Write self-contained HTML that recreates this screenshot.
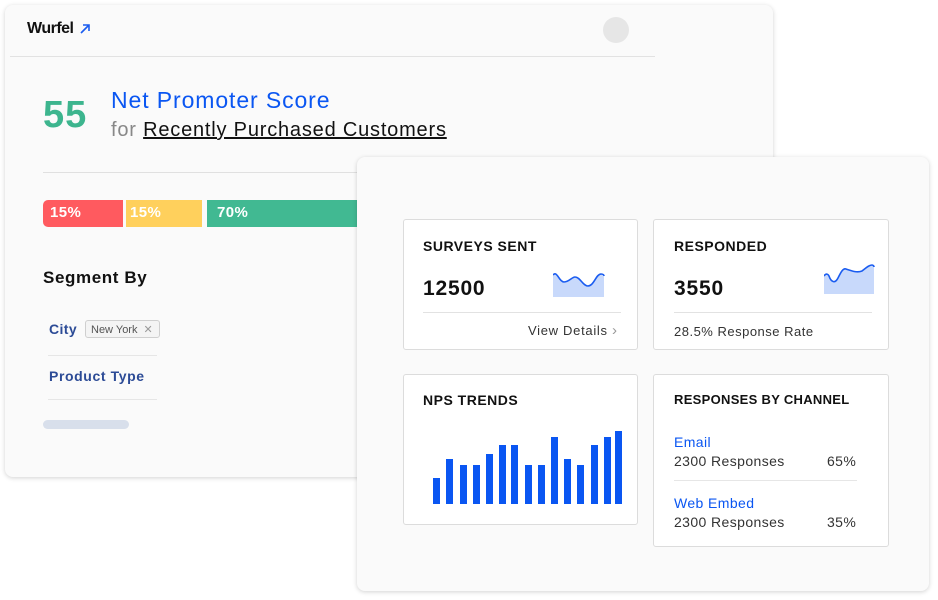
<!DOCTYPE html>
<html><head><style>
*{box-sizing:border-box;margin:0;padding:0}
body{width:938px;height:600px;background:#fff;font-family:"Liberation Sans",sans-serif;position:relative;overflow:hidden;color:#111;letter-spacing:.4px}
.abs{position:absolute}
.card{position:absolute;background:#fafafa;border-radius:8px;box-shadow:0 1px 5px rgba(0,0,0,.18)}
.box{position:absolute;background:#fff;border:1px solid #dcdcdc;border-radius:3px}
.h{position:absolute;font-weight:bold;font-size:14px;letter-spacing:.5px;color:#111}
.big{position:absolute;font-weight:bold;font-size:21px;color:#111;letter-spacing:.8px}
</style></head><body>
<div class="card" style="left:5px;top:5px;width:768px;height:472px"></div>
<div class="abs" style="left:27px;top:20px;font-weight:bold;font-size:16px;letter-spacing:-.5px">Wurfel</div>
<svg class="abs" style="left:79px;top:23px" width="12" height="12" viewBox="0 0 12 12"><path d="M2 10L10 2M4 2H10V8" stroke="#1a5cf0" stroke-width="1.6" fill="none"/></svg>
<div class="abs" style="left:603px;top:17px;width:26px;height:26px;border-radius:50%;background:#e6e6e6"></div>
<div class="abs" style="left:10px;top:56px;width:645px;height:1px;background:#e2e2e2"></div>
<div class="abs" style="left:43px;top:94px;font-size:38px;font-weight:bold;color:#3db58e;letter-spacing:1px">55</div>
<div class="abs" style="left:111px;top:87px;font-size:23px;color:#0a56f2;letter-spacing:.9px">Net Promoter Score</div>
<div class="abs" style="left:111px;top:119px;font-size:20px;color:#888;letter-spacing:.8px">for <span style="color:#111;text-decoration:underline">Recently Purchased Customers</span></div>
<div class="abs" style="left:43px;top:172px;width:320px;height:1px;background:#e0e0e0"></div>
<div class="abs" style="left:43px;top:200px;width:80px;height:27px;background:#ff5a5f;border-radius:5px 0 0 5px;color:#fff;font-weight:bold;font-size:15px;padding:4px 7px">15%</div>
<div class="abs" style="left:126px;top:200px;width:76px;height:27px;background:#ffd05c;color:#fff;font-weight:bold;font-size:15px;padding:4px 4px">15%</div>
<div class="abs" style="left:207px;top:200px;width:152px;height:27px;background:#41b992;color:#fff;font-weight:bold;font-size:15px;padding:4px 10px">70%</div>
<div class="abs" style="left:43px;top:268px;font-size:17px;font-weight:bold;letter-spacing:.6px">Segment By</div>
<div class="abs" style="left:49px;top:321px;font-size:14px;font-weight:bold;color:#2c4b96">City</div>
<div class="abs" style="left:85px;top:320px;width:75px;height:18px;border:1px solid #cfcfcf;border-radius:3px;background:#f4f4f4;font-size:11px;color:#555;padding:2px 5px;letter-spacing:0">New York <span style="color:#999;margin-left:3px">✕</span></div>
<div class="abs" style="left:48px;top:355px;width:109px;height:1px;background:#e6e6e6"></div>
<div class="abs" style="left:49px;top:368px;font-size:14px;font-weight:bold;color:#2c4b96;letter-spacing:.6px">Product Type</div>
<div class="abs" style="left:48px;top:399px;width:109px;height:1px;background:#e6e6e6"></div>
<div class="abs" style="left:43px;top:420px;width:86px;height:9px;border-radius:5px;background:#d8dfeb"></div>

<div class="card" style="left:357px;top:157px;width:572px;height:434px"></div>
<div class="box" style="left:403px;top:219px;width:235px;height:131px"></div>
<div class="h" style="left:423px;top:238px">SURVEYS SENT</div>
<div class="big" style="left:423px;top:277px">12500</div>
<svg class="abs" style="left:553px;top:271px" width="52" height="26" viewBox="0 0 52 26"><path d="M0 4C4 -1 6 11 11 11C16 11 19 6 22 6C27 6 30 15 35 15C41 15 43 3 48 3C50 3 51 4 51 5V26H0Z" fill="#c8d9fb"/><path d="M0 4C4 -1 6 11 11 11C16 11 19 6 22 6C27 6 30 15 35 15C41 15 43 3 48 3C50 3 51 4 51 5" fill="none" stroke="#1a5cf0" stroke-width="1.6"/></svg>
<div class="abs" style="left:423px;top:312px;width:198px;height:1px;background:#e2e2e2"></div>
<div class="abs" style="left:528px;top:322px;font-size:13px;color:#333;letter-spacing:.7px">View Details <span style="color:#999;font-size:15px">›</span></div>

<div class="box" style="left:653px;top:219px;width:236px;height:131px"></div>
<div class="h" style="left:674px;top:238px">RESPONDED</div>
<div class="big" style="left:674px;top:277px">3550</div>
<svg class="abs" style="left:824px;top:263px" width="52" height="32" viewBox="0 0 52 32"><path d="M0 13C2 10 4 11 5 13C7 19 11 21 14 15C17 9 19 5 22 6C28 8 33 10 38 8C42 5 45 2 48 2C49 2 50 3 50 4V31H0Z" fill="#c8d9fb"/><path d="M0 13C2 10 4 11 5 13C7 19 11 21 14 15C17 9 19 5 22 6C28 8 33 10 38 8C42 5 45 2 48 2C49 2 50 3 50 4" fill="none" stroke="#1a5cf0" stroke-width="1.6"/></svg>
<div class="abs" style="left:674px;top:312px;width:198px;height:1px;background:#e2e2e2"></div>
<div class="abs" style="left:674px;top:324px;font-size:13px;color:#333;letter-spacing:.5px">28.5% Response Rate</div>

<div class="box" style="left:403px;top:374px;width:235px;height:151px"></div>
<div class="h" style="left:423px;top:392px">NPS TRENDS</div>
<svg class="abs" style="left:0;top:0" width="938" height="600">
<g fill="#0a56f2">
<rect x="433" y="478" width="7" height="26"/><rect x="446" y="459" width="7" height="45"/><rect x="460" y="465" width="7" height="39"/><rect x="473" y="465" width="7" height="39"/><rect x="486" y="454" width="7" height="50"/><rect x="499" y="445" width="7" height="59"/><rect x="511" y="445" width="7" height="59"/><rect x="525" y="465" width="7" height="39"/><rect x="538" y="465" width="7" height="39"/><rect x="551" y="437" width="7" height="67"/><rect x="564" y="459" width="7" height="45"/><rect x="577" y="465" width="7" height="39"/><rect x="591" y="445" width="7" height="59"/><rect x="604" y="437" width="7" height="67"/><rect x="615" y="431" width="7" height="73"/>
</g></svg>

<div class="box" style="left:653px;top:374px;width:236px;height:173px"></div>
<div class="h" style="left:674px;top:392px;font-size:13px;letter-spacing:.3px">RESPONSES BY CHANNEL</div>
<div class="abs" style="left:674px;top:434px;font-size:14px;color:#0a56f2">Email</div>
<div class="abs" style="left:674px;top:453px;font-size:14px;color:#333">2300 Responses</div>
<div class="abs" style="left:827px;top:453px;font-size:14px;color:#333">65%</div>
<div class="abs" style="left:674px;top:480px;width:183px;height:1px;background:#e6e6e6"></div>
<div class="abs" style="left:674px;top:495px;font-size:14px;color:#0a56f2">Web Embed</div>
<div class="abs" style="left:674px;top:514px;font-size:14px;color:#333">2300 Responses</div>
<div class="abs" style="left:827px;top:514px;font-size:14px;color:#333">35%</div>
</body></html>
